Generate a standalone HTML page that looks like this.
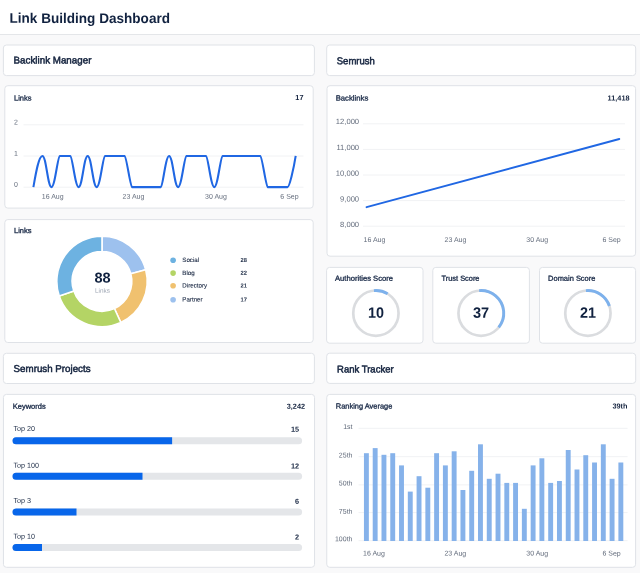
<!DOCTYPE html>
<html lang="en"><head><meta charset="utf-8"><title>Link Building Dashboard</title>
<style>
html,body{margin:0;padding:0}
body{width:640px;height:573px;position:relative;overflow:hidden;background:#f9f9fa;font-family:"Liberation Sans",Arial,Helvetica,sans-serif;color:#14233f}
text{font-family:"Liberation Sans",Arial,Helvetica,sans-serif}
.h1{font-size:14px;font-weight:700;fill:#10213f}
.h2{font-size:10px;fill:#15243f;stroke:#15243f;stroke-width:.5px}
.lb{font-size:7.3px;fill:#1d2d4a;stroke:#1d2d4a;stroke-width:.32px}
.vl{font-size:7.3px;font-weight:700;fill:#14233f}
.ax{font-size:7px;fill:#636c7c}
.ay{font-size:7.6px;fill:#636c7c}
.rg{font-size:7.2px;fill:#1f2e48}
.lg{font-size:6.2px;fill:#1f2d47;stroke:#1f2d47;stroke-width:.12px}
.lgv{font-size:5.8px;font-weight:700;fill:#1f2d47}
.big{font-size:15px;font-weight:700;fill:#10213f}
.b88{font-size:14.2px;font-weight:700;fill:#10213f}
.sm{font-size:6.4px;fill:#a0a8b5}
svg{position:absolute;left:0;top:0;will-change:transform}
</style></head><body>
<svg width="640" height="573" viewBox="0 0 640 573"><rect x="0" y="0" width="640" height="34" fill="#fff"/><line x1="0" x2="640" y1="34.5" y2="34.5" stroke="#e4e6e9" stroke-width="1"/><rect x="3.40" y="45.00" width="311.00" height="30.60" rx="3" fill="#fff" stroke="#dfe2e7" stroke-width="1"/><rect x="326.70" y="45.00" width="309.00" height="30.60" rx="3" fill="#fff" stroke="#dfe2e7" stroke-width="1"/><rect x="4.80" y="85.70" width="308.40" height="122.40" rx="3" fill="#fff" stroke="#dfe2e7" stroke-width="1"/><rect x="4.80" y="219.60" width="308.40" height="122.90" rx="3" fill="#fff" stroke="#dfe2e7" stroke-width="1"/><rect x="327.00" y="85.70" width="308.60" height="170.50" rx="3" fill="#fff" stroke="#dfe2e7" stroke-width="1"/><rect x="326.60" y="267.40" width="96.40" height="75.80" rx="3" fill="#fff" stroke="#dfe2e7" stroke-width="1"/><rect x="432.80" y="267.40" width="96.60" height="75.80" rx="3" fill="#fff" stroke="#dfe2e7" stroke-width="1"/><rect x="539.50" y="267.40" width="96.10" height="75.80" rx="3" fill="#fff" stroke="#dfe2e7" stroke-width="1"/><rect x="3.40" y="353.30" width="311.00" height="30.20" rx="3" fill="#fff" stroke="#dfe2e7" stroke-width="1"/><rect x="326.70" y="353.20" width="309.00" height="30.20" rx="3" fill="#fff" stroke="#dfe2e7" stroke-width="1"/><rect x="3.45" y="394.40" width="311.10" height="172.90" rx="3" fill="#fff" stroke="#dfe2e7" stroke-width="1"/><rect x="326.75" y="394.40" width="308.85" height="172.90" rx="3" fill="#fff" stroke="#dfe2e7" stroke-width="1"/><rect x="12.5" y="437.30" width="289.60" height="7" rx="3.5" fill="#e4e6e9"/><path d="M16.0,437.30H172.1V444.30H16.0A3.5,3.5 0 0 1 16.0,437.30Z" fill="#0866ea"/><rect x="12.5" y="472.80" width="289.60" height="7" rx="3.5" fill="#e4e6e9"/><path d="M16.0,472.80H142.5V479.80H16.0A3.5,3.5 0 0 1 16.0,472.80Z" fill="#0866ea"/><rect x="12.5" y="508.50" width="289.60" height="7" rx="3.5" fill="#e4e6e9"/><path d="M16.0,508.50H76.5V515.50H16.0A3.5,3.5 0 0 1 16.0,508.50Z" fill="#0866ea"/><rect x="12.5" y="544.10" width="289.60" height="7" rx="3.5" fill="#e4e6e9"/><path d="M16.0,544.10H42V551.10H16.0A3.5,3.5 0 0 1 16.0,544.10Z" fill="#0866ea"/><line x1="23.5" x2="303.5" y1="124.8" y2="124.8" stroke="#f1f2f4" stroke-width="1"/><line x1="23.5" x2="303.5" y1="156" y2="156" stroke="#f1f2f4" stroke-width="1"/><line x1="23.5" x2="303.5" y1="187.2" y2="187.2" stroke="#f1f2f4" stroke-width="1"/><path d="M33.40,187.10C35.66,174.00 38.65,155.90 42.44,155.90C46.24,155.90 47.69,187.10 51.49,187.10C54.91,187.10 57.84,155.90 59.63,155.90L60.53,155.90L69.58,155.90L70.48,155.90C72.27,155.90 75.21,187.10 78.62,187.10C82.42,187.10 83.87,155.90 87.67,155.90C91.47,155.90 92.91,187.10 96.71,187.10C100.13,187.10 103.06,155.90 104.85,155.90L105.76,155.90L114.80,155.90L123.85,155.90L124.75,155.90C126.34,155.90 130.40,187.10 131.99,187.10L132.89,187.10L141.94,187.10L150.98,187.10L160.03,187.10L160.93,187.10C162.72,187.10 165.65,155.90 169.07,155.90C172.87,155.90 174.32,187.10 178.12,187.10C181.54,187.10 184.47,155.90 186.26,155.90L187.16,155.90L196.21,155.90L205.25,155.90L206.16,155.90C207.95,155.90 210.88,187.10 214.30,187.10C217.72,187.10 220.65,155.90 222.44,155.90L223.34,155.90L232.39,155.90L241.43,155.90L250.48,155.90L259.52,155.90L260.43,155.90C262.02,155.90 266.07,187.10 267.66,187.10L268.57,187.10L277.61,187.10L286.66,187.10L287.56,187.10C289.35,187.10 293.66,169.00 295.70,155.90" fill="none" stroke="#2067e3" stroke-width="2.05" stroke-linejoin="round"/><line x1="363" x2="625" y1="123.8" y2="123.8" stroke="#f1f2f4" stroke-width="1"/><line x1="363" x2="625" y1="149.4" y2="149.4" stroke="#f1f2f4" stroke-width="1"/><line x1="363" x2="625" y1="175" y2="175" stroke="#f1f2f4" stroke-width="1"/><line x1="363" x2="625" y1="200.6" y2="200.6" stroke="#f1f2f4" stroke-width="1"/><line x1="363" x2="625" y1="226.2" y2="226.2" stroke="#f1f2f4" stroke-width="1"/><line x1="366.6" y1="207.2" x2="619.3" y2="139" stroke="#2067e3" stroke-width="1.9" stroke-linecap="round"/><path d="M102.00,236.20A45.2,45.2 0 0 1 145.70,269.85L130.81,273.79A29.8,29.8 0 0 0 102.00,251.60Z" fill="#9dc1ee" stroke="#fff" stroke-width="1.6" stroke-linejoin="round"/><path d="M145.70,269.85A45.2,45.2 0 0 1 120.82,322.50L114.41,308.50A29.8,29.8 0 0 0 130.81,273.79Z" fill="#f0c16f" stroke="#fff" stroke-width="1.6" stroke-linejoin="round"/><path d="M120.82,322.50A45.2,45.2 0 0 1 59.24,296.04L73.81,291.05A29.8,29.8 0 0 0 114.41,308.50Z" fill="#b4d465" stroke="#fff" stroke-width="1.6" stroke-linejoin="round"/><path d="M59.24,296.04A45.2,45.2 0 0 1 102.00,236.20L102.00,251.60A29.8,29.8 0 0 0 73.81,291.05Z" fill="#6db2e1" stroke="#fff" stroke-width="1.6" stroke-linejoin="round"/><circle cx="173.1" cy="260.2" r="2.8" fill="#6db2e1"/><circle cx="173.1" cy="273.1" r="2.8" fill="#b4d465"/><circle cx="173.1" cy="285.7" r="2.8" fill="#f0c16f"/><circle cx="173.1" cy="299.7" r="2.8" fill="#9dc1ee"/><circle cx="375.9" cy="313.15" r="22.65" fill="none" stroke="#dadcdf" stroke-width="2.7"/><circle cx="375.9" cy="313.15" r="22.65" fill="none" stroke="#7db1ec" stroke-width="2.9" stroke-dasharray="14.23 142.31" transform="rotate(-95 375.9 313.15)"/><circle cx="481.1" cy="313.15" r="22.65" fill="none" stroke="#dadcdf" stroke-width="2.7"/><circle cx="481.1" cy="313.15" r="22.65" fill="none" stroke="#7db1ec" stroke-width="2.9" stroke-dasharray="52.66 142.31" transform="rotate(-95 481.1 313.15)"/><circle cx="587.9" cy="313.15" r="22.65" fill="none" stroke="#dadcdf" stroke-width="2.7"/><circle cx="587.9" cy="313.15" r="22.65" fill="none" stroke="#7db1ec" stroke-width="2.9" stroke-dasharray="29.89 142.31" transform="rotate(-95 587.9 313.15)"/><line x1="358.5" x2="627.6" y1="428.3" y2="428.3" stroke="#f1f2f4" stroke-width="1"/><line x1="358.5" x2="627.6" y1="456.7" y2="456.7" stroke="#f1f2f4" stroke-width="1"/><line x1="358.5" x2="627.6" y1="484.9" y2="484.9" stroke="#f1f2f4" stroke-width="1"/><line x1="358.5" x2="627.6" y1="512.6" y2="512.6" stroke="#f1f2f4" stroke-width="1"/><line x1="358.5" x2="627.6" y1="540.7" y2="540.7" stroke="#f1f2f4" stroke-width="1"/><rect x="363.95" y="453.2" width="4.9" height="87.80" fill="#86b2ea"/><rect x="372.72" y="448.1" width="4.9" height="92.90" fill="#86b2ea"/><rect x="381.50" y="454.8" width="4.9" height="86.20" fill="#86b2ea"/><rect x="390.27" y="453.2" width="4.9" height="87.80" fill="#86b2ea"/><rect x="399.05" y="465.4" width="4.9" height="75.60" fill="#86b2ea"/><rect x="407.82" y="491.6" width="4.9" height="49.40" fill="#86b2ea"/><rect x="416.59" y="476.2" width="4.9" height="64.80" fill="#86b2ea"/><rect x="425.37" y="487.7" width="4.9" height="53.30" fill="#86b2ea"/><rect x="434.14" y="453.2" width="4.9" height="87.80" fill="#86b2ea"/><rect x="442.92" y="465.4" width="4.9" height="75.60" fill="#86b2ea"/><rect x="451.69" y="451.3" width="4.9" height="89.70" fill="#86b2ea"/><rect x="460.47" y="490" width="4.9" height="51.00" fill="#86b2ea"/><rect x="469.24" y="470.8" width="4.9" height="70.20" fill="#86b2ea"/><rect x="478.01" y="444.3" width="4.9" height="96.70" fill="#86b2ea"/><rect x="486.79" y="478.8" width="4.9" height="62.20" fill="#86b2ea"/><rect x="495.56" y="473.7" width="4.9" height="67.30" fill="#86b2ea"/><rect x="504.34" y="482.9" width="4.9" height="58.10" fill="#86b2ea"/><rect x="513.11" y="482.9" width="4.9" height="58.10" fill="#86b2ea"/><rect x="521.88" y="508.8" width="4.9" height="32.20" fill="#86b2ea"/><rect x="530.66" y="465.4" width="4.9" height="75.60" fill="#86b2ea"/><rect x="539.43" y="458.3" width="4.9" height="82.70" fill="#86b2ea"/><rect x="548.21" y="482.9" width="4.9" height="58.10" fill="#86b2ea"/><rect x="556.98" y="481" width="4.9" height="60.00" fill="#86b2ea"/><rect x="565.76" y="450" width="4.9" height="91.00" fill="#86b2ea"/><rect x="574.53" y="469.5" width="4.9" height="71.50" fill="#86b2ea"/><rect x="583.30" y="455.2" width="4.9" height="85.80" fill="#86b2ea"/><rect x="592.08" y="462.5" width="4.9" height="78.50" fill="#86b2ea"/><rect x="600.85" y="444.3" width="4.9" height="96.70" fill="#86b2ea"/><rect x="609.63" y="478.8" width="4.9" height="62.20" fill="#86b2ea"/><rect x="618.40" y="462.5" width="4.9" height="78.50" fill="#86b2ea"/><text class="h1" x="9.50" y="22.87" textLength="160.5" lengthAdjust="spacingAndGlyphs" transform="matrix(1,.0008,0,1,0,-0.008)">Link Building Dashboard</text><text class="h2" x="13.60" y="63.48" textLength="77.8" lengthAdjust="spacingAndGlyphs" transform="matrix(1,.0008,0,1,0,-0.011)">Backlink Manager</text><text class="h2" x="336.75" y="64.28" textLength="38.1" lengthAdjust="spacingAndGlyphs" transform="matrix(1,.0008,0,1,0,-0.269)">Semrush</text><text class="h2" x="13.60" y="371.98" textLength="77" lengthAdjust="spacingAndGlyphs" transform="matrix(1,.0008,0,1,0,-0.011)">Semrush Projects</text><text class="h2" x="337.10" y="372.48" textLength="56.5" lengthAdjust="spacingAndGlyphs" transform="matrix(1,.0008,0,1,0,-0.270)">Rank Tracker</text><text class="lb" x="14.00" y="100.54" textLength="17.5" lengthAdjust="spacingAndGlyphs" transform="matrix(1,.0008,0,1,0,-0.011)">Links</text><text class="vl" x="303.50" y="100.04" text-anchor="end" transform="matrix(1,.0008,0,1,0,-0.243)">17</text><text class="ax" x="14.00" y="124.44" transform="matrix(1,.0008,0,1,0,-0.011)">2</text><text class="ax" x="14.00" y="155.64" transform="matrix(1,.0008,0,1,0,-0.011)">1</text><text class="ax" x="14.00" y="186.84" transform="matrix(1,.0008,0,1,0,-0.011)">0</text><text class="ax" x="52.75" y="198.84" text-anchor="middle" transform="matrix(1,.0008,0,1,0,-0.042)">16 Aug</text><text class="ax" x="133.50" y="198.84" text-anchor="middle" transform="matrix(1,.0008,0,1,0,-0.107)">23 Aug</text><text class="ax" x="216.00" y="198.84" text-anchor="middle" transform="matrix(1,.0008,0,1,0,-0.173)">30 Aug</text><text class="ax" x="289.50" y="198.84" text-anchor="middle" transform="matrix(1,.0008,0,1,0,-0.232)">6 Sep</text><text class="lb" x="335.70" y="100.54" textLength="32.6" lengthAdjust="spacingAndGlyphs" transform="matrix(1,.0008,0,1,0,-0.269)">Backlinks</text><text class="vl" x="629.50" y="100.54" text-anchor="end" transform="matrix(1,.0008,0,1,0,-0.504)">11,418</text><text class="ay" x="359.10" y="124.14" text-anchor="end" transform="matrix(1,.0008,0,1,0,-0.287)">12,000</text><text class="ay" x="359.10" y="149.94" text-anchor="end" transform="matrix(1,.0008,0,1,0,-0.287)">11,000</text><text class="ay" x="359.10" y="175.74" text-anchor="end" transform="matrix(1,.0008,0,1,0,-0.287)">10,000</text><text class="ay" x="359.10" y="201.44" text-anchor="end" transform="matrix(1,.0008,0,1,0,-0.287)">9,000</text><text class="ay" x="359.10" y="227.14" text-anchor="end" transform="matrix(1,.0008,0,1,0,-0.287)">8,000</text><text class="ax" x="374.50" y="242.04" text-anchor="middle" transform="matrix(1,.0008,0,1,0,-0.300)">16 Aug</text><text class="ax" x="455.50" y="242.04" text-anchor="middle" transform="matrix(1,.0008,0,1,0,-0.364)">23 Aug</text><text class="ax" x="537.20" y="242.04" text-anchor="middle" transform="matrix(1,.0008,0,1,0,-0.430)">30 Aug</text><text class="ax" x="611.60" y="242.04" text-anchor="middle" transform="matrix(1,.0008,0,1,0,-0.489)">6 Sep</text><text class="lb" x="14.00" y="233.04" textLength="17.5" lengthAdjust="spacingAndGlyphs" transform="matrix(1,.0008,0,1,0,-0.011)">Links</text><text class="b88" x="102.50" y="282.44" text-anchor="middle" textLength="16.2" lengthAdjust="spacingAndGlyphs" transform="matrix(1,.0008,0,1,0,-0.082)">88</text><text class="sm" x="102.40" y="292.73" text-anchor="middle" transform="matrix(1,.0008,0,1,0,-0.082)">Links</text><text class="lg" x="182.30" y="262.06" transform="matrix(1,.0008,0,1,0,-0.146)">Social</text><text class="lgv" x="240.50" y="261.92" transform="matrix(1,.0008,0,1,0,-0.192)">28</text><text class="lg" x="182.30" y="274.96" transform="matrix(1,.0008,0,1,0,-0.146)">Blog</text><text class="lgv" x="240.50" y="274.82" transform="matrix(1,.0008,0,1,0,-0.192)">22</text><text class="lg" x="182.30" y="287.56" transform="matrix(1,.0008,0,1,0,-0.146)">Directory</text><text class="lgv" x="240.50" y="287.42" transform="matrix(1,.0008,0,1,0,-0.192)">21</text><text class="lg" x="182.30" y="301.56" transform="matrix(1,.0008,0,1,0,-0.146)">Partner</text><text class="lgv" x="240.50" y="301.42" transform="matrix(1,.0008,0,1,0,-0.192)">17</text><text class="lb" x="335.00" y="280.74" textLength="58" lengthAdjust="spacingAndGlyphs" transform="matrix(1,.0008,0,1,0,-0.268)">Authorities Score</text><text class="big" x="375.90" y="317.82" text-anchor="middle" textLength="16.0" lengthAdjust="spacingAndGlyphs" transform="matrix(1,.0008,0,1,0,-0.301)">10</text><text class="lb" x="441.50" y="280.74" textLength="38" lengthAdjust="spacingAndGlyphs" transform="matrix(1,.0008,0,1,0,-0.353)">Trust Score</text><text class="big" x="481.10" y="317.82" text-anchor="middle" textLength="16.2" lengthAdjust="spacingAndGlyphs" transform="matrix(1,.0008,0,1,0,-0.385)">37</text><text class="lb" x="548.10" y="280.74" textLength="47.3" lengthAdjust="spacingAndGlyphs" transform="matrix(1,.0008,0,1,0,-0.438)">Domain Score</text><text class="big" x="587.90" y="317.82" text-anchor="middle" textLength="16.0" lengthAdjust="spacingAndGlyphs" transform="matrix(1,.0008,0,1,0,-0.470)">21</text><text class="lb" x="12.75" y="408.74" textLength="33" lengthAdjust="spacingAndGlyphs" transform="matrix(1,.0008,0,1,0,-0.010)">Keywords</text><text class="vl" x="305.00" y="408.84" text-anchor="end" transform="matrix(1,.0008,0,1,0,-0.244)">3,242</text><text class="rg" x="13.50" y="431.01" transform="matrix(1,.0008,0,1,0,-0.011)">Top 20</text><text class="vl" x="299.10" y="431.84" text-anchor="end" transform="matrix(1,.0008,0,1,0,-0.239)">15</text><text class="rg" x="13.50" y="467.81" transform="matrix(1,.0008,0,1,0,-0.011)">Top 100</text><text class="vl" x="299.10" y="468.64" text-anchor="end" transform="matrix(1,.0008,0,1,0,-0.239)">12</text><text class="rg" x="13.50" y="503.01" transform="matrix(1,.0008,0,1,0,-0.011)">Top 3</text><text class="vl" x="299.10" y="503.84" text-anchor="end" transform="matrix(1,.0008,0,1,0,-0.239)">6</text><text class="rg" x="13.50" y="538.71" transform="matrix(1,.0008,0,1,0,-0.011)">Top 10</text><text class="vl" x="299.10" y="539.54" text-anchor="end" transform="matrix(1,.0008,0,1,0,-0.239)">2</text><text class="lb" x="335.80" y="408.54" textLength="56.6" lengthAdjust="spacingAndGlyphs" transform="matrix(1,.0008,0,1,0,-0.269)">Ranking Average</text><text class="vl" x="627.50" y="408.54" text-anchor="end" transform="matrix(1,.0008,0,1,0,-0.502)">39th</text><text class="ax" x="352.50" y="429.14" text-anchor="end" transform="matrix(1,.0008,0,1,0,-0.282)">1st</text><text class="ax" x="352.50" y="457.64" text-anchor="end" transform="matrix(1,.0008,0,1,0,-0.282)">25th</text><text class="ax" x="352.50" y="485.64" text-anchor="end" transform="matrix(1,.0008,0,1,0,-0.282)">50th</text><text class="ax" x="352.50" y="513.84" text-anchor="end" transform="matrix(1,.0008,0,1,0,-0.282)">75th</text><text class="ax" x="352.50" y="541.24" text-anchor="end" transform="matrix(1,.0008,0,1,0,-0.282)">100th</text><text class="ax" x="374.00" y="555.64" text-anchor="middle" transform="matrix(1,.0008,0,1,0,-0.299)">16 Aug</text><text class="ax" x="455.30" y="555.64" text-anchor="middle" transform="matrix(1,.0008,0,1,0,-0.364)">23 Aug</text><text class="ax" x="537.20" y="555.64" text-anchor="middle" transform="matrix(1,.0008,0,1,0,-0.430)">30 Aug</text><text class="ax" x="611.60" y="555.64" text-anchor="middle" transform="matrix(1,.0008,0,1,0,-0.489)">6 Sep</text></svg></body></html>
